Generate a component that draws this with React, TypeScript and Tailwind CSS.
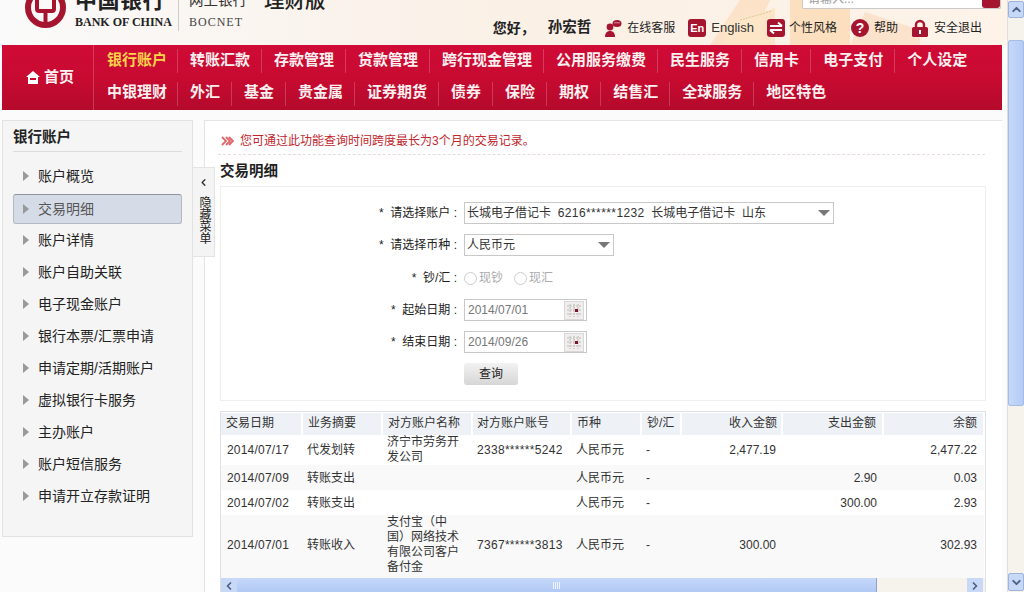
import React from 'react';
import { ChevronDown, ChevronLeft, ChevronRight, ChevronUp } from 'lucide-react';

const navRowOne = ['银行账户', '转账汇款', '存款管理', '贷款管理', '跨行现金管理', '公用服务缴费', '民生服务', '信用卡', '电子支付', '个人设定'];
const navRowTwo = ['中银理财', '外汇', '基金', '贵金属', '证券期货', '债券', '保险', '期权', '结售汇', '全球服务', '地区特色'];
const sideItems = ['账户概览', '交易明细', '账户详情', '账户自助关联', '电子现金账户', '银行本票/汇票申请', '申请定期/活期账户', '虚拟银行卡服务', '主办账户', '账户短信服务', '申请开立存款证明'];

const rows = [
  { h: 'h-[30px]', bg: 'bg-white', pad: '', date: '2014/07/17', kind: '代发划转', name: '济宁市劳务开发公司', acct: '2338******5242', income: '2,477.19', out: '', left: '2,477.22' },
  { h: 'h-[25px]', bg: 'bg-[#f9f9f9]', pad: '', date: '2014/07/09', kind: '转账支出', name: '', acct: '', income: '', out: '2.90', left: '0.03' },
  { h: 'h-[25px]', bg: 'bg-white', pad: '', date: '2014/07/02', kind: '转账支出', name: '', acct: '', income: '', out: '300.00', left: '2.93' },
  { h: 'h-[62px]', bg: 'bg-[#f9f9f9]', pad: 'pb-[3px]', date: '2014/07/01', kind: '转账收入', name: '支付宝（中国）网络技术有限公司客户备付金', acct: '7367******3813', income: '300.00', out: '', left: '302.93' },
];

const Logo = () => (
  <svg width="41" height="44" viewBox="0 0 41 44" className="mt-[-15px] shrink-0">
    <circle cx="20.5" cy="22.5" r="17.5" fill="none" stroke="#a5152f" strokeWidth="6" />
    <rect x="12" y="13" width="17" height="13" rx="2" fill="none" stroke="#a5152f" strokeWidth="4" />
    <path d="M20.5 2v11M20.5 26v16" stroke="#a5152f" strokeWidth="4" />
  </svg>
);

const Buildings = () => (
  <svg width="300" height="45" viewBox="0 0 300 45" className="absolute left-[680px] top-0">
    <path d="M30 45 L60 0 H90 L70 45 Z" fill="#fbd9b4" opacity="0.6" />
    <path d="M45 45 V22 L95 8 V45 Z" fill="#fde6c8" />
    <path d="M110 45 V0 H170 V45 Z" fill="#fcd7ac" opacity="0.7" />
    <path d="M170 45 L185 12 L240 30 V45 Z" fill="#fbdcc0" opacity="0.7" />
    <path d="M60 20 L92 11" stroke="#d9c6a0" strokeWidth="1" strokeDasharray="2 1" />
  </svg>
);

const CalendarIcon = () => (
  <svg width="20" height="19" viewBox="0 0 20 19" className="shrink-0">
    <rect x="0.5" y="0.5" width="19" height="18" fill="#f2eeee" stroke="#d8d8d8" />
    <path d="M3 5h14M3 9h14M3 13h14M6 3v13M10 3v13M14 3v13" stroke="#cfcaca" strokeWidth="1.6" strokeDasharray="2 1" />
    <rect x="11" y="8" width="3" height="3" fill="#7a1530" />
  </svg>
);

const FormRow = ({ label, gap = 'mb-[10px]', children }: { label: string; gap?: string; children: React.ReactNode }) => (
  <div className={`flex h-[22px] ${gap} items-center`}>
    <div className="w-[236px] text-right text-[12px] text-[#222] whitespace-pre">{'*  ' + label + ' :'}</div>
    <div className="ml-[7px] flex items-center">{children}</div>
  </div>
);

const SelectBox = ({ width, children }: { width: string; children: React.ReactNode }) => (
  <div className={`${width} h-[22px] flex items-center justify-between border border-[#c8c8c8] pl-[2px] pr-[3px] text-[12px] text-[#333] whitespace-pre`}>
    <span>{children}</span>
    <svg width="12" height="6" viewBox="0 0 12 6"><path d="M0 0h12L6 6z" fill="#777" /></svg>
  </div>
);

const DateBox = ({ value }: { value: string }) => (
  <div className="w-[123px] h-[22px] flex items-center justify-between border border-[#c8c8c8] pl-[3px] pr-[2px] text-[12px] text-[#777]">
    <span>{value}</span>
    <CalendarIcon />
  </div>
);

const Radio = ({ text }: { text: string }) => (
  <span className="flex items-center mr-[11px] text-[12px] text-[#aaa]">
    <span className="w-[13px] h-[13px] rounded-full border border-[#ccc] bg-white mr-[2px]" />
    {text}
  </span>
);

const NavRow = ({ items, height, active }: { items: string[]; height: string; active?: string }) => (
  <div className={`flex items-center ${height}`}>
    {items.map(item => (
      <a
        key={item}
        className={`h-[24px] pb-[2px] flex items-center pl-[12px] pr-[11px] first:pl-[13px] first:pr-[10px] border-r border-white/20 last:border-r-0 whitespace-nowrap ${
          item === active ? 'text-[#ffd34a]' : 'text-[#fdf0f0]'
        }`}
      >
        {item}
      </a>
    ))}
  </div>
);

const th = 'h-[22px] pb-[2px] bg-[#eef2f6] border-r-2 border-white font-normal text-[12px] text-[#333]';
const td = 'text-[12px] text-[#333] align-middle';

export default function App() {
  return (
    <div className="w-[1024px] h-[592px] overflow-hidden flex bg-[#fbfbfb] font-['Liberation_Sans','Noto_Sans_CJK_SC',sans-serif]">
      <div className="w-[1007px] shrink-0 flex flex-col">
        <header className="relative h-[45px] flex items-start justify-between overflow-hidden bg-gradient-to-r from-[#fafafa] via-[#faf0e6] to-[#fdf3e8]">
          <Buildings />
          <div className="relative flex items-start pl-[25px]">
            <Logo />
            <div className="ml-[9px] w-[94px]">
              <div className="mt-[-12px] text-[22px] leading-[26px] font-bold text-[#222] whitespace-nowrap tracking-[0.5px] font-['Liberation_Serif','Noto_Sans_CJK_SC',serif]">中国银行</div>
              <div className="mt-[2px] text-[12px] leading-[13px] text-[#222] whitespace-nowrap font-['Liberation_Serif',serif] font-bold">BANK OF CHINA</div>
            </div>
            <div className="ml-[9px] h-[31px] border-l border-[#ccc]" />
            <div className="ml-[10px] w-[75px]">
              <div className="mt-[-9px] text-[14.5px] leading-[18px] text-[#333]">网上银行</div>
              <div className="mt-[7px] text-[12px] leading-[13px] tracking-[1px] text-[#444] font-['Liberation_Serif',serif]">BOCNET</div>
            </div>
            <div className="mt-[-11px] text-[20.5px] leading-[24px] font-medium text-[#222] whitespace-nowrap">理财版</div>
          </div>
          <div className="relative flex flex-col items-end pr-[6px]">
            <div className="w-[199px] h-[9px] flex justify-between bg-white border border-t-0 border-[#c9c9c9] rounded-b-[2px]">
              <span className="mt-[-8px] ml-[5px] text-[12px] leading-[14px] text-[#999]">请输入...</span>
              <span className="w-[18px] h-[8px] bg-[#a5152f] rounded-b-[3px]" />
            </div>
            <div className="mt-[10px] h-[18px] flex items-center pr-[19px] text-[12px] text-[#222] whitespace-nowrap">
              <span className="text-[14px] font-bold">您好，</span>
              <span className="ml-[13px] text-[14.5px] font-bold">孙宏哲</span>
              <svg width="18" height="18" viewBox="0 0 18 18" className="ml-[13px]">
                <circle cx="6" cy="8" r="3.4" fill="#a5152f" />
                <path d="M1 18c0-4 2-6 5-6s5 2 5 6z" fill="#a5152f" />
                <ellipse cx="13" cy="4.5" rx="4.5" ry="3.5" fill="#a5152f" />
                <path d="M10.5 3.8h5" stroke="#fff" strokeWidth="1" strokeDasharray="1 1" />
              </svg>
              <span className="ml-[5px]">在线客服</span>
              <span className="ml-[13px] w-[18px] h-[18px] rounded-[3px] bg-[#a5152f] text-white text-[11px] font-bold leading-[18px] text-center">En</span>
              <span className="ml-[5px] text-[13px] text-[#333]">English</span>
              <svg width="18" height="18" viewBox="0 0 18 18" className="ml-[13px]">
                <rect width="18" height="18" rx="3" fill="#a5152f" />
                <path d="M3 7h12M11 3.5L15 7M15 11H3M7 14.5L3 11" stroke="#fff" strokeWidth="2" fill="none" />
              </svg>
              <span className="ml-[4px]">个性风格</span>
              <span className="ml-[14px] w-[18px] h-[18px] rounded-full bg-[#a5152f] text-white text-[14px] font-bold leading-[18px] text-center">?</span>
              <span className="ml-[5px]">帮助</span>
              <svg width="18" height="18" viewBox="0 0 18 18" className="ml-[13px]">
                <path d="M5 9V6a4 4 0 0 1 8 0v3" stroke="#a5152f" strokeWidth="2.4" fill="none" />
                <rect x="1" y="8" width="16" height="10" rx="1.5" fill="#a5152f" />
                <rect x="8" y="11" width="2" height="4" fill="#fff" />
              </svg>
              <span className="ml-[5px]">安全退出</span>
            </div>
          </div>
        </header>

        <nav className="ml-[2px] w-[1000px] h-[65px] flex shrink-0 text-[15px] font-bold bg-gradient-to-b from-[#cf0b36] via-[#c80a31] to-[#b40a2b]">
          <div className="w-[92px] shrink-0 border-r border-white/20 flex items-center pl-[24px] text-[#fdf0f0]">
            <svg width="14" height="13" viewBox="0 0 14 13" className="mr-[4px]">
              <path d="M7 0L14 6H12V13H2V6H0Z" fill="#fff" />
              <rect x="4" y="7" width="6" height="2" fill="#c80a31" />
            </svg>
            首页
          </div>
          <div className="flex flex-col">
            <NavRow items={navRowOne} height="h-[32px]" active="银行账户" />
            <NavRow items={navRowTwo} height="h-[33px]" />
          </div>
        </nav>

        <div className="flex flex-1 min-h-0 mt-[10px] pl-[2px]">
          <div className="relative w-[191px] shrink-0">
            <aside className="w-[191px] h-[417px] px-[10px] bg-[#f5f5f5] border border-[#e2e2e2]">
              <div className="h-[31px] pt-[3px] flex items-center border-b border-[#dcdcdc] text-[14.5px] font-bold text-[#222]">银行账户</div>
              <ul className="mt-[8px]">
                {sideItems.map(item => (
                  <li key={item} className="h-[32px] flex items-center">
                    <div
                      className={
                        item === '交易明细'
                          ? 'w-full h-[30px] self-end flex items-center rounded-[3px] bg-[#d5dce8] border border-[#b4b8c0] border-t-[#8f939b] text-[#555]'
                          : 'w-full flex items-center border border-transparent text-[#222]'
                      }
                    >
                      <svg width="6" height="10" viewBox="0 0 6 10" className="ml-[9px] mr-[9px] shrink-0"><path d="M0 0L6 5L0 10Z" fill="#999" /></svg>
                      <span className="text-[14px] whitespace-nowrap">{item}</span>
                    </div>
                  </li>
                ))}
              </ul>
            </aside>
            <div className="absolute z-10 left-[191px] top-[47px] w-[22px] h-[90px] flex flex-col items-center bg-[#f4f4f4] border border-l-0 border-[#e4e4e4] text-[12px] leading-[12px] text-[#222]">
              <ChevronLeft size={11} strokeWidth={3} className="mt-[9px] mb-[9px] text-[#333]" />
              <span className="w-[12px] ml-[4px]">隐藏菜单</span>
            </div>
          </div>

          <main className="ml-[11px] w-[798px] shrink-0 bg-white border-l border-t border-[#e4e4e4] overflow-hidden">
            <div className="ml-[13px] w-[767px] h-[34px] pt-[12px] pl-[3px] flex items-start border-b border-dashed border-[#e6dcdc] text-[12px] leading-[16px] text-[#c0272d]">
              <svg width="13" height="10" viewBox="0 0 13 10" className="mt-[3px] mr-[6px]">
                <path d="M1 1l4 4-4 4M5 1l4 4-4 4M8 1l4 4-4 4" stroke="#e0666a" strokeWidth="1.8" fill="none" />
              </svg>
              您可通过此功能查询时间跨度最长为3个月的交易记录。
            </div>
            <div className="ml-[15px] h-[31px] flex items-center text-[14.5px] font-bold text-[#222] pt-[3px]">交易明细</div>

            <section className="ml-[15px] w-[766px] h-[215px] pt-[15px] border border-[#eeeeee]">
              <FormRow label="请选择账户">
                <SelectBox width="w-[370px]">
                  长城电子借记卡  <span className="tracking-[0.4px]">6216******1232</span>  长城电子借记卡  山东
                </SelectBox>
              </FormRow>
              <FormRow label="请选择币种" gap="mb-[11px]">
                <SelectBox width="w-[150px]">人民币元</SelectBox>
              </FormRow>
              <FormRow label="钞/汇">
                <Radio text="现钞" />
                <Radio text="现汇" />
              </FormRow>
              <FormRow label="起始日期">
                <DateBox value="2014/07/01" />
              </FormRow>
              <FormRow label="结束日期">
                <DateBox value="2014/09/26" />
              </FormRow>
              <div className="ml-[243px] w-[54px] h-[22px] flex items-center justify-center rounded-[3px] bg-gradient-to-b from-[#f2f2f2] to-[#d6d6d6] text-[12px] text-[#222]">查询</div>
            </section>

            <section className="ml-[15px] mt-[10px] w-[766px] h-[181px] pt-px border border-b-0 border-[#dde1e5] overflow-hidden">
              <table className="table-fixed w-[763px] border-collapse">
                <colgroup>
                  <col className="w-[81px]" />
                  <col className="w-[80px]" />
                  <col className="w-[90px]" />
                  <col className="w-[99px]" />
                  <col className="w-[70px]" />
                  <col className="w-[40px]" />
                  <col className="w-[101px]" />
                  <col className="w-[101px]" />
                  <col className="w-[101px]" />
                </colgroup>
                <thead>
                  <tr>
                    <th className={`${th} text-left pl-[5px]`}>交易日期</th>
                    <th className={`${th} text-left pl-[5px]`}>业务摘要</th>
                    <th className={`${th} text-left pl-[5px]`}>对方账户名称</th>
                    <th className={`${th} text-left pl-[4px]`}>对方账户账号</th>
                    <th className={`${th} text-left pl-[5px]`}>币种</th>
                    <th className={`${th} text-left pl-[5px]`}>钞/汇</th>
                    <th className={`${th} text-right pr-[4px]`}>收入金额</th>
                    <th className={`${th} text-right pr-[6px]`}>支出金额</th>
                    <th className={`${th} text-right pr-[6px]`}>余额</th>
                  </tr>
                </thead>
                <tbody>
                  {rows.map(row => (
                    <tr key={row.date} className={`${row.h} ${row.bg}`}>
                      <td className={`${td} ${row.pad} pl-[6px] tracking-[0.2px]`}>{row.date}</td>
                      <td className={`${td} ${row.pad} pl-[5px]`}>{row.kind}</td>
                      <td className={`${td} ${row.pad} pl-[5px] pr-[13px] leading-[15px] break-all`}>{row.name}</td>
                      <td className={`${td} ${row.pad} pl-[5px] tracking-[0.3px]`}>{row.acct}</td>
                      <td className={`${td} ${row.pad} pl-[5px]`}>人民币元</td>
                      <td className={`${td} ${row.pad} pl-[5px]`}>-</td>
                      <td className={`${td} ${row.pad} text-right pr-[6px]`}>{row.income}</td>
                      <td className={`${td} ${row.pad} text-right pr-[6px]`}>{row.out}</td>
                      <td className={`${td} ${row.pad} text-right pr-[7px]`}>{row.left}</td>
                    </tr>
                  ))}
                </tbody>
              </table>
              <div className="h-[15px] flex bg-[#f5f3ec]">
                <div className="w-[16px] flex items-center justify-center bg-[#c8d9f8] text-[#4d6185]">
                  <ChevronLeft size={12} strokeWidth={3.5} />
                </div>
                <div className="w-[640px] flex items-center justify-center bg-gradient-to-b from-[#c6d8fa] to-[#afc8f4] border-r border-[#8ea3c8]">
                  <span className="w-[7px] h-[7px] bg-[repeating-linear-gradient(90deg,#eef3fd_0,#eef3fd_1px,transparent_1px,transparent_2px)]" />
                </div>
                <div className="w-[90px]" />
                <div className="w-[16px] flex items-center justify-center bg-[#c8d9f8] text-[#4d6185]">
                  <ChevronRight size={12} strokeWidth={3.5} />
                </div>
              </div>
            </section>
          </main>
        </div>
      </div>

      <div className="w-[17px] shrink-0 pt-px pb-px flex flex-col bg-[#f5f3ec] border-l border-[#dedede]">
        <div className="h-[17px] flex items-center justify-center rounded-[2px] bg-[#c8d9f8] border border-[#9db4dc] text-[#4d6185]">
          <ChevronUp size={13} strokeWidth={3.5} />
        </div>
        <div className="h-[22px]" />
        <div className="h-[366px] rounded-[2px] bg-gradient-to-r from-[#c6d8fa] to-[#b4ccf6] border border-[#a6bce4]" />
        <div className="flex-1" />
        <div className="h-[18px] flex items-center justify-center rounded-[2px] bg-[#c8d9f8] border border-[#9db4dc] text-[#4d6185]">
          <ChevronDown size={13} strokeWidth={3.5} />
        </div>
      </div>
    </div>
  );
}
